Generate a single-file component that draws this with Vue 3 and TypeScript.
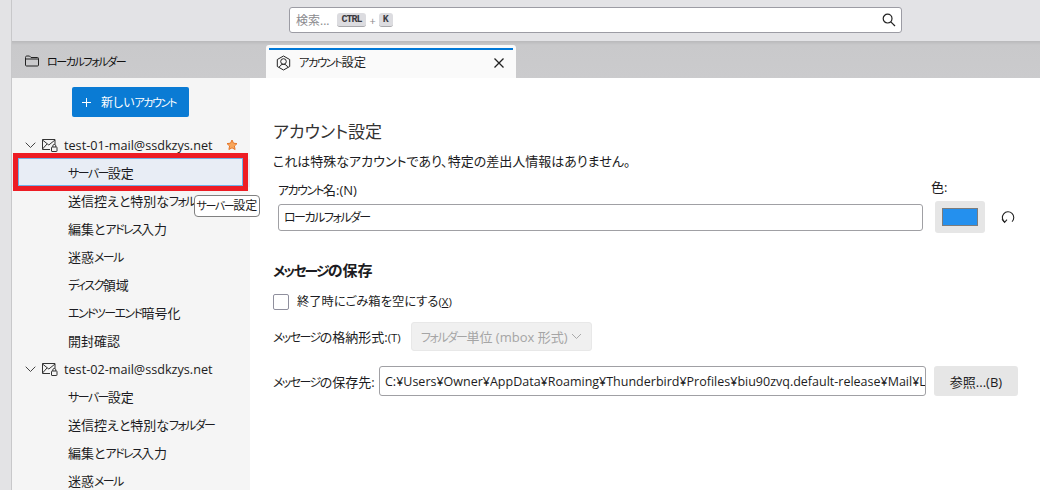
<script setup lang="ts">
import { h, type FunctionalComponent } from 'vue'

interface Account { name: string; star: boolean; items: string[] }
const accounts: Account[] = [
  { name: 'test-01-mail@ssdkzys.net', star: true, items: ['サーバー設定', '送信控えと特別なフォルダー', '編集とアドレス入力', '迷惑メール', 'ディスク領域', 'エンドツーエンド暗号化', '開封確認'] },
  { name: 'test-02-mail@ssdkzys.net', star: false, items: ['サーバー設定', '送信控えと特別なフォルダー', '編集とアドレス入力', '迷惑メール'] },
]
const accountName = 'ローカルフォルダー'
const storePath = 'C:¥Users¥Owner¥AppData¥Roaming¥Thunderbird¥Profiles¥biu90zvq.default-release¥Mail¥Local Folders'

// Katakana runs are set narrower, as the UI font of the original does.
const K: FunctionalComponent<{ t: string }> = (props) =>
  props.t.split(/([ァ-ヶー]+)/).filter(Boolean).map((run) =>
    /^[ァ-ヶー]+$/.test(run) ? h('span', { class: 'kata' }, run) : run,
  )
K.props = ['t']
</script>

<template>
  <div class="app">
    <div class="strip"></div>
    <div class="main">
      <header class="topbar">
        <div class="search">
          <span class="ph">検索...</span>
          <kbd>CTRL</kbd><span class="plus">+</span><kbd>K</kbd>
          <svg class="mag" width="14" height="14" viewBox="0 0 14 14" fill="none" stroke="#222" stroke-width="1.2"><circle cx="5.6" cy="5.6" r="4.4"/><path d="M8.8 8.8 13 13"/></svg>
        </div>
      </header>
      <nav class="tabs">
        <div class="tab-folder">
          <svg width="14" height="12" viewBox="0 0 14 12" fill="none" stroke="#222" stroke-width="1"><path d="M.5 2.500c0-1 .5-1.500 1.500-1.500h2.500l1.500 1.500h6.500c.7 0 1 .4 1 1v6.500c0 .7-.4 1-1 1h-11c-.6 0-1-.4-1-1z"/><path d="M.5 4h13"/></svg>
          <span><K t="ローカルフォルダー" /></span>
        </div>
        <div class="tab-active">
          <span class="tab-line"></span>
          <svg width="15" height="16" viewBox="0 0 15 16" fill="none" stroke="#222" stroke-width="1"><path d="M7.500 1 13.700 4.500v7L7.500 15 1.300 11.500v-7z"/><circle cx="7.500" cy="6.500" r="2.800"/><path d="M3.300 12.300c.6-2 2.200-3 4.200-3s3.600 1 4.200 3"/></svg>
          <span class="tab-title"><K t="アカウント設定" /></span>
          <svg class="close" width="10" height="10" viewBox="0 0 10 10" stroke="#222" stroke-width="1.300"><path d="M.5.5l9 9M9.500.5l-9 9"/></svg>
        </div>
      </nav>
      <div class="body">
        <aside class="side">
          <button class="new">
            <svg class="pl" width="9" height="9" viewBox="0 0 9 9" stroke="#fff" stroke-width="1"><path d="M4.500 0v9M0 4.500h9"/></svg>
            <span><K t="新しいアカウント" /></span>
          </button>
          <div v-for="(a, ai) in accounts" :key="a.name" class="acct">
            <div class="acct-row">
              <svg class="chev" width="11" height="7" viewBox="0 0 11 7" fill="none" stroke="#444" stroke-width="1"><path d="M.7.7l4.800 4.800L10.300.7"/></svg>
              <svg class="mail" width="16" height="13" viewBox="0 0 16 13" fill="none" stroke="#333" stroke-width="1"><path d="M8 10.500H.5v-10h12.500v5"/><path d="M.5 1 6.800 6 13 1M.5 10 5 5"/><rect x="9.500" y="8" width="5.500" height="4.500" rx=".5" fill="#f5f5f5"/><path d="M10.800 8V6.800c0-1.800 3-1.800 3 0V8"/></svg>
              <span class="acct-name">{{ a.name }}</span>
              <svg v-if="a.star" class="star" width="12" height="12" viewBox="0 0 12 12" fill="#f9a65a" stroke="#e5772a" stroke-width="1"><path d="M6 1l1.500 3.200 3.500.4-2.600 2.400.7 3.500L6 8.800 2.900 10.500l.7-3.500L1 4.600l3.500-.4z"/></svg>
            </div>
            <div v-for="(it, i) in a.items" :key="it" class="item" :class="{ sel: ai === 0 && i === 0 }"><K :t="it" /></div>
          </div>
          <div class="redbox"></div>
          <div class="tip"><K t="サーバー設定" /></div>
        </aside>
        <section class="content">
          <h1>アカウント設定</h1>
          <p class="desc">これは特殊なアカウントであり、特定の差出人情報はありません。</p>
          <div class="name-grid">
            <label class="name-label"><K t="アカウント名:(N)" /></label>
            <label class="color-label">色:</label>
            <span></span>
            <input class="input name-input" :value="accountName" readonly />
            <div class="colorbtn"><span class="swatch"></span></div>
            <svg class="reset" width="14" height="14" viewBox="0 0 14 14" fill="none" stroke="#222" stroke-width="1.100"><path d="M3.600 12A5.700 5.700 0 1 1 11 11.600"/><path d="M1 9 3.600 12.300 6 9.700"/></svg>
          </div>
          <h2><K t="メッセージの保存" /></h2>
          <label class="check"><span class="box"></span>終了時にごみ箱を空にする<span class="ak">(<u>X</u>)</span></label>
          <div class="row-type">
            <span class="type-label"><K t="メッセージの格納形式:" /><span class="ak">(T)</span></span>
            <div class="select"><span><K t="フォルダー単位 (mbox 形式)" /></span><svg width="11" height="7" viewBox="0 0 11 7" fill="none" stroke="#aaa" stroke-width="1"><path d="M1 1l4.500 4.500L10 1"/></svg></div>
          </div>
          <div class="row-path">
            <span class="path-label"><K t="メッセージの保存先:" /></span>
            <input class="input path-input" :value="storePath" readonly />
            <button class="browse">参照...(B)</button>
          </div>
        </section>
      </div>
    </div>
  </div>
</template>

<style>
html, body { margin: 0; overflow: hidden; background: #fff; }
.kata { font-size: 0.92em; letter-spacing: -0.13em; }
</style>

<style scoped>
.app { display: flex; width: 1040px; height: 490px; overflow: hidden; font-family: "Open Sans", "Noto Sans CJK JP", sans-serif; font-size: 12.500px; color: #1c1c22; font-feature-settings: "palt"; }
.strip { width: 11px; background: #e3e3e5; border-right: 1px solid #c8c8ca; flex: none; }
.main { flex: 1; min-width: 0; display: flex; flex-direction: column; }
.topbar { background: #e3e3e6; display: flex; padding: 7px 0 0 277px; box-sizing: border-box; flex: none; height: 41px; }
.search { width: 613px; height: 26px; box-sizing: border-box; background: #fff; border: 1px solid #9c9ca4; border-radius: 3px; display: flex; align-items: center; padding: 0 5px 0 6px; font-size: 12px; color: #8a8a8e; }
.ph { margin-right: 8px; }
kbd { font: 700 10px "Liberation Mono", monospace; letter-spacing: -1px; color: #3a3a40; background: #dcdce0; border-radius: 3px; border-bottom: 1px solid #a8a8ac; padding: 1px 5px 0 4px; line-height: 12px; }
.plus { margin: 0 3px; font-size: 11px; }
.mag { margin-left: auto; }
.tabs { height: 37px; background: linear-gradient(#b9b9bb, #c9c9cb 4px, #cbcbcd); display: flex; flex: none; position: relative; }
.tab-folder { width: 254px; padding: 3px 0 0 13px; box-sizing: border-box; display: flex; align-items: center; gap: 8px; font-size: 12px; color: #111; }
.tab-active { position: relative; width: 250px; height: 33px; margin-top: 4px; background: #fafafa; box-sizing: border-box; border-radius: 3px 3px 0 0; display: flex; align-items: center; padding: 3px 12px 0 10px; gap: 8px; font-size: 12.300px; }
.tab-line { position: absolute; left: 3px; right: 3px; top: 3px; height: 2px; background: #0078d7; }
.tab-title { flex: 1; line-height: 22px; }
.body { flex: 1; display: flex; min-height: 0; }
.side { width: 238px; flex: none; background: #f5f5f5; position: relative; padding-top: 9px; box-sizing: border-box; }
.new { display: flex; align-items: center; margin-left: 60px; width: 117px; height: 30px; border: none; border-radius: 2px; background: #0a7bd4; color: #fff; font: inherit; font-size: 12px; padding: 0 0 0 10px; box-sizing: border-box; }
.pl { margin-right: 10px; }
.acct-row { height: 28px; display: flex; align-items: center; padding-left: 13px; }
.acct:first-of-type .acct-row { margin-top: 14px; }
.chev { margin-right: 6px; }
.mail { margin-right: 6px; }
.acct-name { font-size: 12.650px; line-height: 26px; }
.star { margin-left: 13px; }
.item { height: 28px; line-height: 28px; padding-left: 56px; font-size: 13px; white-space: nowrap; }
.item.sel { background: #e8edf5; }
.redbox { position: absolute; left: 1px; top: 75px; width: 235px; height: 38px; box-sizing: border-box; border: 5px solid #ed1c24; outline: 1px solid #6fb1e8; outline-offset: -6px; pointer-events: none; }
.tip { position: absolute; z-index: 2; left: 182px; top: 117px; width: 66px; height: 22px; line-height: 20px; text-align: center; box-sizing: border-box; background: #fff; border: 1px solid #808080; border-radius: 4px; font-size: 12px; white-space: nowrap; }
.content { flex: 1; min-width: 0; padding: 41px 22px 0 23px; overflow: hidden; font-size: 13px; }
h1 { margin: 0; font-size: 17px; font-weight: 400; line-height: 26px; color: #333; }
.desc { margin: 7px 0 0; line-height: 18px; }
.name-grid { display: grid; grid-template-columns: 645px 50px 32px; column-gap: 12px; margin: 10px 0 0 5px; align-items: center; }
.name-label { line-height: 20px; }
.color-label { line-height: 20px; margin-left: -4px; transform: translateY(-4px); }
.input { display: block; width: 100%; background: #fff; border: 1px solid #a0a0a4; border-radius: 3px; box-sizing: border-box; height: 27px; padding: 0 0 0 5px; font: inherit; font-feature-settings: "palt"; color: inherit; outline: none; }
.name-input { font-size: 12px; letter-spacing: -1.500px; }
.colorbtn { grid-column: 2; width: 50px; height: 32px; background: #e6e6e6; border-radius: 3px; display: flex; align-items: center; justify-content: center; }
.swatch { width: 36px; height: 18px; box-sizing: border-box; background: #2490ee; border: 1px solid #7c7c7c; }
.reset { margin-left: 4px; }
h2 { margin: 27px 0 0; font-size: 15px; line-height: 20px; font-weight: 700; }
.check { display: flex; align-items: center; margin-top: 12px; line-height: 18px; font-size: 12.300px; }
.box { width: 14px; height: 14px; border: 1px solid #8f8f9d; border-radius: 2px; margin-right: 8px; background: #fff; }
.ak { font-size: 11.500px; }
.row-type { display: flex; align-items: center; margin-top: 11px; }
.type-label { width: 138px; flex: none; white-space: nowrap; }
.select { width: 181px; height: 29px; box-sizing: border-box; background: #f0f0f0; border: 1px solid #e8e8e8; border-radius: 3px; color: #a5a5a5; display: flex; align-items: center; gap: 4px; padding-left: 9px; white-space: nowrap; }
.row-path { display: flex; align-items: center; margin-top: 15px; }
.path-label { width: 106px; flex: none; white-space: nowrap; }
.path-input { width: 547px; flex: none; height: 30px; font-size: 12.500px; }
.browse { margin-left: 8px; width: 84px; height: 30px; background: #e6e6e6; border: none; border-radius: 3px; font: inherit; color: #1c1c22; padding: 0; }
</style>
